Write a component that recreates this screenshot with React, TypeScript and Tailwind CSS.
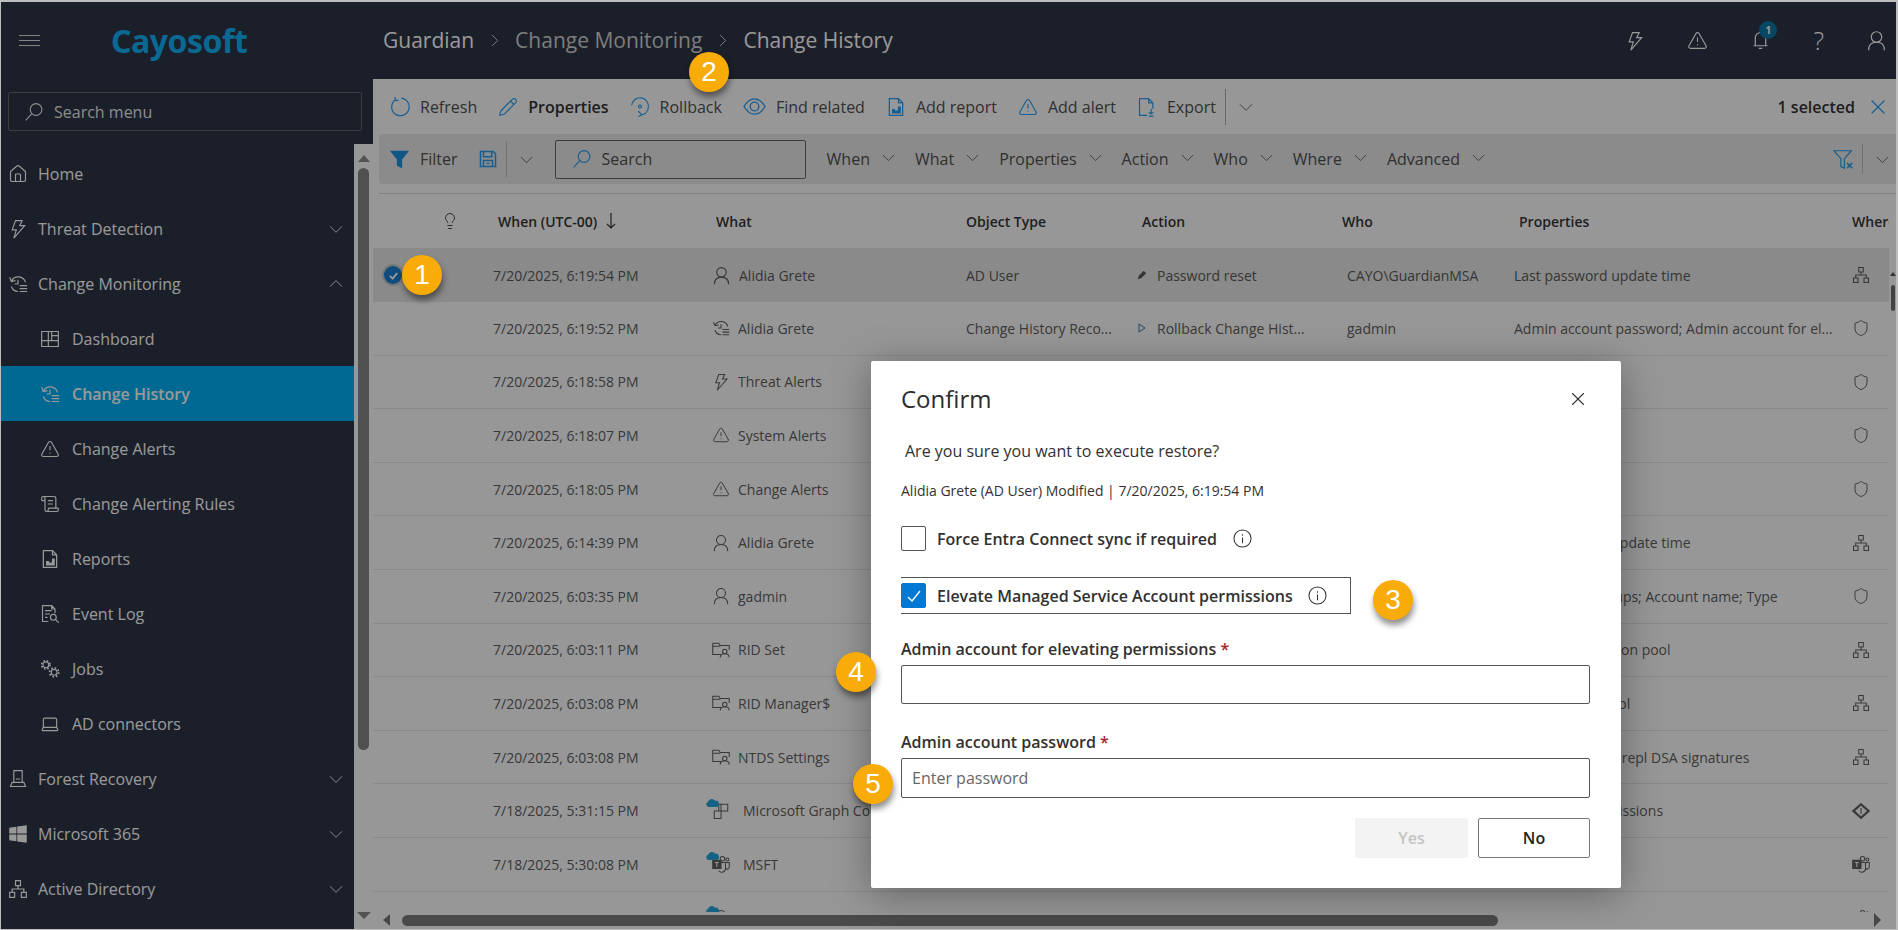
import type { ReactNode } from "react";
import { Home, Laptop, Lightbulb, Pencil, ScrollText, Shield, TriangleAlert, X } from "lucide-react";
import { FaWindows } from "react-icons/fa";

type IconProps = { className?: string };

const Svg = ({ className = "size-5", sw = 1.4, children }: IconProps & { sw?: number; children: ReactNode }) => (
  <svg viewBox="0 0 24 24" fill="none" stroke="currentColor" strokeWidth={sw} className={`shrink-0 ${className}`}>
    {children}
  </svg>
);

const Chevron = ({ className = "size-4" }: IconProps) => (
  <Svg className={className} sw={1.3}>
    <path d="M3 8l9 9 9-9" />
  </Svg>
);
const Bolt = ({ className }: IconProps) => (
  <Svg className={className}>
    <path d="M9 2h8l-3 6h6L7 23l3-10H5z" />
  </Svg>
);
const History = ({ className }: IconProps) => (
  <Svg className={className}>
    <path d="M4 9a9 9 0 0 1 17 1M2 4l2 5 5-1M4 15a9 9 0 0 0 8 6M12 7v5H8M14 14h9M14 17.5h9M14 21h9" />
  </Svg>
);
const Dashboard = ({ className }: IconProps) => (
  <Svg className={className}>
    <path d="M2 3h20v18H2zM10 3v11M2 14h8M10 14h12M14 3v11M14 8h8M10 14v7" />
  </Svg>
);
const Report = ({ className }: IconProps) => (
  <Svg className={className} sw={1.5}>
    <path d="M4 2h11l5 5v15H4zM15 2v5h5" />
    <path d="M8 19v-4h2v4zM11.5 19v-2h2v2zM15 19v-7h2v7z" fill="currentColor" />
  </Svg>
);
const EventLog = ({ className }: IconProps) => (
  <Svg className={className}>
    <path d="M10 21H3V2h11l4 4v5M14 2v4h4M6 8h8M6 12h6M6 16h3" />
    <circle cx="16" cy="16" r="3.5" />
    <path d="M19 19l3.5 3.5" />
  </Svg>
);
const Jobs = ({ className }: IconProps) => (
  <Svg className={className}>
    <circle cx="7" cy="7" r="3.5" />
    <circle cx="7" cy="7" r="5" strokeWidth="2" strokeDasharray="2 2" />
    <circle cx="17" cy="16" r="3.5" />
    <circle cx="17" cy="16" r="5.5" strokeWidth="2" strokeDasharray="2 2.3" />
  </Svg>
);
const Forest = ({ className }: IconProps) => (
  <Svg className={className}>
    <path d="M7 2h10v14H7zM9.5 12h5M5 16h14l2 5H3z" />
  </Svg>
);
const Sitemap = ({ className }: IconProps) => (
  <Svg className={className}>
    <path d="M9 2h6v6H9zM2 16h6v6H2zM16 16h6v6h-6zM12 8v4M5 16v-4h14v4" />
  </Svg>
);
const SearchIcon = ({ className }: IconProps) => (
  <Svg className={className}>
    <circle cx="14.5" cy="9" r="7" />
    <path d="M9.5 14L2 22" />
  </Svg>
);
const Refresh = ({ className }: IconProps) => (
  <Svg className={className}>
    <path d="M7 4.5A10 10 0 1 0 14 2.5M7 1v4h4" />
  </Svg>
);
const Rollback = ({ className }: IconProps) => (
  <Svg className={className}>
    <path d="M2 10A10 10 0 0 1 22 12a10 10 0 0 1-8 9.5M10 17l4 4.5-4 2" />
    <circle cx="12" cy="11.5" r="1.8" />
  </Svg>
);
const Eye = ({ className }: IconProps) => (
  <Svg className={className}>
    <path d="M1 12c3-5 7-8 11-8s8 3 11 8c-3 5-7 8-11 8s-8-3-11-8z" />
    <circle cx="12" cy="12" r="4.5" />
  </Svg>
);
const Export = ({ className }: IconProps) => (
  <Svg className={className}>
    <path d="M12 22H3V2h11l5 5v7M14 2v5h5M17 14v7M14 19h6M14 23h6" />
  </Svg>
);
const Floppy = ({ className }: IconProps) => (
  <Svg className={className} sw={2}>
    <path d="M2 2h17l3 3v17H2zM6 2v7h11V2M6 22v-8h12v8M10 18h4" />
  </Svg>
);
const FilterClear = ({ className }: IconProps) => (
  <Svg className={className}>
    <path d="M1 2h20l-8 9v11l-4-2v-9z" />
    <path d="M16 16l6 6M22 16l-6 6" strokeWidth="2" />
  </Svg>
);
const User = ({ className }: IconProps) => (
  <Svg className={className}>
    <circle cx="12" cy="8" r="6" />
    <path d="M3 23c0-6 3-9 9-9s9 3 9 9" />
  </Svg>
);
const FolderUser = ({ className }: IconProps) => (
  <Svg className={className}>
    <path d="M12 18H1V3h8l2 3h12v6M1 7h10" />
    <circle cx="17" cy="14" r="3" />
    <path d="M11 22c0-3 2-5 6-5s6 2 6 5" />
  </Svg>
);
const Teams = ({ className }: IconProps) => (
  <Svg className={className}>
    <circle cx="14" cy="5" r="3" />
    <circle cx="20.5" cy="6" r="2" />
    <path d="M9 10h9v8a5 5 0 0 1-9 3M18 10h5v6a3 3 0 0 1-5 2" />
    <rect x="1" y="7" width="11" height="11" fill="currentColor" />
    <path d="M4 10h5M6.5 10v6" stroke="#fff" />
  </Svg>
);
const Azure = ({ className }: IconProps) => (
  <Svg className={className} sw={3}>
    <path d="M12 3l10 9-10 9-10-9z" />
    <path d="M12 8v8" strokeWidth="1.5" />
  </Svg>
);
const GridApp = ({ className }: IconProps) => (
  <Svg className={className}>
    <path d="M9 3h12v9H9zM3 12h9v10H3zM12 3v19" />
  </Svg>
);
const Cloud = () => (
  <svg viewBox="0 0 16 10" className="absolute -left-[7px] -top-[4px] h-[9px] w-[15px] text-[#25a4dc]" fill="currentColor">
    <path d="M4 10a3 3 0 0 1-1-5.8A4.5 4.5 0 0 1 11 3a3.5 3.5 0 0 1 1.500 7z" />
  </svg>
);

const Badge = ({ n, className }: { n: number; className: string }) => (
  <div className={`absolute z-30 flex size-10 items-center justify-center rounded-full bg-[#f9ab0a] font-['Liberation_Sans',sans-serif] text-[28px] text-white shadow-[1px_5px_6px_rgba(0,0,0,0.45)] ${className}`}>
    {n}
  </div>
);

const NavItem = ({ icon, label, chevron, sub, active }: { icon: ReactNode; label: string; chevron?: "up" | "down"; sub?: boolean; active?: boolean }) => (
  <div className={`flex h-[55px] shrink-0 items-center text-[16px] ${sub ? "pl-[39px]" : "pl-[7px]"} ${active ? "bg-[#00b0f5] font-semibold" : ""}`}>
    <span className={sub ? "flex w-[32px]" : "flex w-[30px]"}>{icon}</span>
    <span className="flex-1">{label}</span>
    {chevron && <Chevron className={`mr-[10px] size-[16px] ${chevron === "up" ? "rotate-180" : ""}`} />}
  </div>
);

const Tool = ({ icon, label, bold }: { icon: ReactNode; label: string; bold?: boolean }) => (
  <div className="flex items-center gap-[10px]">
    <span className="text-[#2a9df0]">{icon}</span>
    <span className={bold ? "font-semibold text-[#333]" : ""}>{label}</span>
  </div>
);

const FilterMenu = ({ label }: { label: string }) => (
  <div className="flex items-center gap-[11px]">
    {label}
    <Chevron className="size-[15px] -translate-y-[2px]" />
  </div>
);

type Row = { date: string; icon: ReactNode; name: string; type: string; action: ReactNode; who: string; props: string; where: ReactNode; cloud?: boolean };

const ud = "size-[18px]";
const shield = <Shield className="size-[18px]" strokeWidth={1.3} />;
const site = <Sitemap className="size-[18px]" />;

const rows: Row[] = [
  { date: "7/20/2025, 6:19:52 PM", icon: <History className={ud} />, name: "Alidia Grete", type: "Change History Reco...", action: <><svg viewBox="0 0 10 10" className="mr-[10px] size-[10px] text-[#2a7dc0]" fill="none" stroke="currentColor"><path d="M2 1l6 4-6 4z" /></svg>Rollback Change Hist...</>, who: "gadmin", props: "Admin account password; Admin account for el...", where: shield },
  { date: "7/20/2025, 6:18:58 PM", icon: <Bolt className={ud} />, name: "Threat Alerts", type: "Alert", action: "Created", who: "System", props: "Severity", where: shield },
  { date: "7/20/2025, 6:18:07 PM", icon: <TriangleAlert className={ud} strokeWidth={1.3} />, name: "System Alerts", type: "Alert", action: "Created", who: "System", props: "Severity", where: shield },
  { date: "7/20/2025, 6:18:05 PM", icon: <TriangleAlert className={ud} strokeWidth={1.3} />, name: "Change Alerts", type: "Alert", action: "Created", who: "System", props: "Severity", where: shield },
  { date: "7/20/2025, 6:14:39 PM", icon: <User className={ud} />, name: "Alidia Grete", type: "AD User", action: "Password reset", who: "gadmin", props: "Last password update time", where: site },
  { date: "7/20/2025, 6:03:35 PM", icon: <User className={ud} />, name: "gadmin", type: "AD User", action: "Modified", who: "gadmin", props: "Member of Groups; Account name; Type", where: shield },
  { date: "7/20/2025, 6:03:11 PM", icon: <FolderUser className={ud} />, name: "RID Set", type: "Container", action: "Modified", who: "SYSTEM", props: "Next RID allocation pool", where: site },
  { date: "7/20/2025, 6:03:08 PM", icon: <FolderUser className={ud} />, name: "RID Manager$", type: "Container", action: "Modified", who: "SYSTEM", props: "RID available pool", where: site },
  { date: "7/20/2025, 6:03:08 PM", icon: <FolderUser className={ud} />, name: "NTDS Settings", type: "Container", action: "Modified", who: "SYSTEM", props: "Count of retired repl DSA signatures", where: site },
  { date: "7/18/2025, 5:31:15 PM", icon: <GridApp className={ud} />, name: "Microsoft Graph Command Line Tools", type: "Entra App", action: "Modified", who: "admin", props: "Delegated permissions", where: <Azure className={ud} />, cloud: true },
  { date: "7/18/2025, 5:30:08 PM", icon: <Teams className={ud} />, name: "MSFT", type: "Team", action: "Modified", who: "admin", props: "Team settings", where: <Teams className={ud} />, cloud: true },
  { date: "7/18/2025, 5:30:07 PM", icon: <User className={ud} />, name: "MSFT", type: "Entra Group", action: "Add Member", who: "admin", props: "Members", where: <Teams className={ud} />, cloud: true },
];

const cols = "grid grid-cols-[120px_219px_254px_171px_210px_167px_340px_35px]";

const Check = ({ on }: { on?: boolean }) => (
  <span className={`flex size-[25px] shrink-0 items-center justify-center rounded-[2px] border ${on ? "border-[#0078d4] bg-[#0078d4]" : "border-[#555]"}`}>
    {on && (
      <svg viewBox="0 0 16 16" className="size-[16px]" fill="none" stroke="#fff" strokeWidth="1.3">
        <path d="M2 9l4 4 8-10" />
      </svg>
    )}
  </span>
);

const Info = () => (
  <svg viewBox="0 0 20 20" className="size-[19px] shrink-0 text-[#333]" fill="none" stroke="currentColor" strokeWidth="1.1">
    <circle cx="10" cy="10" r="9" />
    <path d="M10 9v6M10 5.500v1.500" />
  </svg>
);

export default function App() {
  return (
    <div className="relative h-[930px] overflow-hidden border-t-2 border-r-2 border-b border-l border-[#bdbdbd] bg-[#fcfcfc] font-['Open_Sans',sans-serif] text-[#505050]">
      {/* HEADER */}
      <header className="flex h-[77px] items-center bg-[#2d3446] text-[#f0f0f0]">
        <div className="flex w-[382px] items-center">
          <div className="ml-[18px] flex w-[21px] flex-col gap-[4px]">
            <span className="h-px bg-[#ddd]" />
            <span className="h-px bg-[#ddd]" />
            <span className="h-px bg-[#ddd]" />
          </div>
          <span className="ml-[71px] font-['Noto_Sans',sans-serif] text-[32px] font-bold tracking-[-0.5px] text-[#12b0f5]">Cayosoft</span>
        </div>
        <div className="flex items-center text-[21px]">
          <span className="text-[#fff]">Guardian</span>
          <Chevron className="mx-[13px] size-[15px] -rotate-90" />
          <span className="text-[#cfd0d2]">Change Monitoring</span>
          <Chevron className="mx-[13px] size-[15px] -rotate-90" />
          <span className="text-[#fff]">Change History</span>
        </div>
        <div className="ml-auto flex items-center gap-[42px] pr-[9px] text-[#fff]">
          <Bolt className="size-[20px]" />
          <TriangleAlert className="size-[21px]" strokeWidth={1.3} />
          <div className="relative">
            <svg viewBox="0 0 24 24" className="size-[21px]" fill="none" stroke="currentColor" strokeWidth="1.4">
              <path d="M6 18V9a6 6 0 0 1 12 0v9M4 18h16M10 21h4" />
            </svg>
            <span className="absolute -right-[6px] -top-[9px] flex size-[18px] items-center justify-center rounded-full bg-[#0b77a5] text-[10px] font-bold text-white">1</span>
          </div>
          <span className="text-[25px] leading-none font-light">?</span>
          <User className="size-[21px]" />
        </div>
      </header>

      <div className="flex h-[850px]">
        {/* SIDEBAR */}
        <aside className="flex w-[372px] shrink-0 flex-col bg-[#2d3446] text-[#fff]">
          <div className="ml-[7px] mt-[13px] flex h-[39px] w-[354px] items-center gap-[10px] rounded-[2px] border border-[#64666a] pl-[15px] text-[16px] text-[#e8e8e8]">
            <SearchIcon className="size-[20px]" />
            Search menu
          </div>
          <div className="mt-[13px] flex min-h-0 flex-1">
            <nav className="flex w-[353px] flex-col overflow-hidden pt-[2px]">
              <NavItem icon={<Home className="size-5" strokeWidth={1.4} />} label="Home" />
              <NavItem icon={<Bolt className="size-5" />} label="Threat Detection" chevron="down" />
              <NavItem icon={<History className="size-5" />} label="Change Monitoring" chevron="up" />
              <NavItem sub icon={<Dashboard className="size-5" />} label="Dashboard" />
              <NavItem sub active icon={<History className="size-5" />} label="Change History" />
              <NavItem sub icon={<TriangleAlert className="size-5" strokeWidth={1.4} />} label="Change Alerts" />
              <NavItem sub icon={<ScrollText className="size-5" strokeWidth={1.4} />} label="Change Alerting Rules" />
              <NavItem sub icon={<Report className="size-5" />} label="Reports" />
              <NavItem sub icon={<EventLog className="size-5" />} label="Event Log" />
              <NavItem sub icon={<Jobs className="size-5" />} label="Jobs" />
              <NavItem sub icon={<Laptop className="size-5" strokeWidth={1.4} />} label="AD connectors" />
              <NavItem icon={<Forest className="size-5" />} label="Forest Recovery" chevron="down" />
              <NavItem icon={<FaWindows className="size-5" />} label="Microsoft 365" chevron="down" />
              <NavItem icon={<Sitemap className="size-5" />} label="Active Directory" chevron="down" />
            </nav>
            {/* sidebar scrollbar */}
            <div className="flex w-[19px] flex-col items-center bg-[#fcfcfc] pt-[11px]">
              <span className="size-0 border-x-[6px] border-b-[7px] border-x-transparent border-b-[#8a8a8a]" />
              <span className="mt-[6px] h-[582px] w-[11px] rounded-full bg-[#858585]" />
              <span className="mt-auto mb-[10px] size-0 border-x-[7px] border-t-[7px] border-x-transparent border-t-[#8a8a8a]" />
            </div>
          </div>
        </aside>

        {/* MAIN */}
        <main className="flex min-w-0 flex-1 flex-col text-[16px]">
          <div className="flex h-[55px] shrink-0 items-center gap-[21px] pl-[16px]">
            <Tool icon={<Refresh className="size-[21px]" />} label="Refresh" />
            <Tool bold icon={<Pencil className="size-[20px]" strokeWidth={1.4} />} label="Properties" />
            <Tool icon={<Rollback className="size-[20px]" />} label="Rollback" />
            <Tool icon={<Eye className="size-[23px]" />} label="Find related" />
            <Tool icon={<Report className="size-[20px]" />} label="Add report" />
            <Tool icon={<TriangleAlert className="size-[20px]" strokeWidth={1.4} />} label="Add alert" />
            <Tool icon={<Export className="size-[20px]" />} label="Export" />
            <span className="-ml-[12px] h-[36px] w-px bg-[#aaa]" />
            <Chevron className="-ml-[9px] size-[16px]" />
            <div className="ml-auto flex items-center gap-[11px] pr-[6px]">
              <span className="font-semibold text-[#333]">1 selected</span>
              <X className="size-[24px] text-[#2a9df0]" strokeWidth={1.2} />
            </div>
          </div>

          <div className="ml-[6px] flex h-[50px] shrink-0 items-center rounded-l-[3px] bg-[#e8e8e8] pl-[10px] pr-[6px]">
            <svg viewBox="0 0 24 24" className="size-[21px] text-[#1b8fe0]" fill="currentColor">
              <path d="M1 2h22l-8 10v10l-6-3v-7z" />
            </svg>
            <span className="ml-[10px]">Filter</span>
            <Floppy className="ml-[21px] size-[18px] text-[#2a9df0]" />
            <span className="ml-[9px] h-[36px] w-px bg-[#bbb]" />
            <Chevron className="ml-[12px] size-[15px]" />
            <div className="ml-[21px] flex h-[39px] w-[251px] items-center gap-[10px] rounded-[2px] border border-[#666] pl-[16px]">
              <SearchIcon className="size-[20px] text-[#2a9df0]" />
              Search
            </div>
            <div className="ml-[21px] flex items-center gap-[19px]">
              <FilterMenu label="When" />
              <FilterMenu label="What" />
              <FilterMenu label="Properties" />
              <FilterMenu label="Action" />
              <FilterMenu label="Who" />
              <FilterMenu label="Where" />
              <FilterMenu label="Advanced" />
            </div>
            <FilterClear className="ml-auto size-[21px] text-[#2a9df0]" />
            <span className="ml-[8px] h-[30px] w-px bg-[#bbb]" />
            <Chevron className="ml-[12px] size-[15px]" />
          </div>

          <div className="ml-[6px] mt-[9px] h-px shrink-0 bg-[#d8d8d8]" />

          <div className="flex min-h-0 flex-1">
            <div className="h-[718px] w-[1516px] shrink-0 overflow-hidden text-[14px]">
              <div className={`${cols} h-[54px] items-center font-semibold text-[#363636]`}>
                <span className="pl-[68px]">
                  <Lightbulb className="size-[18px] text-[#444]" strokeWidth={1.3} />
                </span>
                <span className="flex items-center gap-[8px] pl-[5px]">
                  When (UTC-00)
                  <svg viewBox="0 0 12 18" className="h-[18px] w-[12px]" fill="none" stroke="currentColor" strokeWidth="1.200">
                    <path d="M6 1v15M2 12l4 4 4-4" />
                  </svg>
                </span>
                <span className="pl-[4px]">What</span>
                <span>Object Type</span>
                <span className="pl-[5px]">Action</span>
                <span className="-ml-[5px]">Who</span>
                <span className="pl-[5px]">Properties</span>
                <span className="-ml-[2px] overflow-hidden">Where</span>
              </div>

              {/* selected row */}
              <div className={`${cols} h-[54px] items-center bg-[#e6e6e6] text-[#5a5a5a]`}>
                <span className="pl-[11px]">
                  <span className="flex size-[18px] items-center justify-center rounded-full bg-[#1b7fd0] shadow-[0_0_0_2px_#c8c8c8]">
                    <svg viewBox="0 0 12 12" className="size-[11px]" fill="none" stroke="#fff" strokeWidth="2">
                      <path d="M2 6.500l3 3 5-6" />
                    </svg>
                  </span>
                </span>
                <span>7/20/2025, 6:19:54 PM</span>
                <span className="flex items-center gap-[8px]">
                  <User className="size-[19px]" />
                  Alidia Grete
                </span>
                <span>AD User</span>
                <span className="flex items-center">
                  <svg viewBox="0 0 12 12" className="mr-[10px] size-[10px]" fill="currentColor">
                    <path d="M1 11l1-4 6-6 3 3-6 6z" />
                  </svg>
                  Password reset
                </span>
                <span>CAYO\GuardianMSA</span>
                <span>Last password update time</span>
                <span className="col-start-8 flex -translate-x-[2px]">
                  <Sitemap className="size-[18px]" />
                </span>
              </div>

              {rows.map((r, i) => (
                <div key={i} className={`${cols} h-[53.6px] items-center border-b border-[#e4e4e4] text-[#5f5f5f]`}>
                  <span className="col-start-2">{r.date}</span>
                  <span className="flex min-w-0 items-center whitespace-nowrap">
                    <span className="relative mr-[8px] flex">
                      {r.cloud && <Cloud />}
                      {r.icon}
                    </span>
                    <span className={r.cloud ? "truncate pl-[5px]" : "truncate"}>{r.name}</span>
                  </span>
                  <span className="truncate">{r.type}</span>
                  <span className="flex items-center whitespace-nowrap">{r.action}</span>
                  <span>{r.who}</span>
                  <span className="whitespace-nowrap">{r.props}</span>
                  <span className="col-start-8 flex -translate-x-[2px]">{r.where}</span>
                </div>
              ))}
            </div>
            {/* table vertical scrollbar */}
            <div className="flex flex-1 flex-col items-center pt-[78px]">
              <span className="size-0 border-x-[3px] border-b-[4px] border-x-transparent border-b-[#555]" />
              <span className="mt-[9px] h-[26px] w-[4px] rounded-full bg-[#707070]" />
            </div>
          </div>

          {/* table horizontal scrollbar */}
          <div className="flex h-[18px] shrink-0 items-center pl-[10px]">
            <span className="size-0 border-y-[6px] border-r-[7px] border-y-transparent border-r-[#777]" />
            <span className="ml-[12px] h-[11px] w-[1096px] rounded-full bg-[#7c7c7c]" />
            <span className="ml-auto mr-[15px] size-0 border-y-[7px] border-l-[7px] border-y-transparent border-l-[#777]" />
          </div>
        </main>
      </div>

      {/* MODAL BACKDROP */}
      <div className="absolute inset-0 z-10 bg-black/40" />

      {/* DIALOG */}
      <div className="absolute left-[869.5px] top-[359px] z-20 h-[527px] w-[750px] rounded-[2px] bg-white px-[30.5px] pt-[21px] text-[16px] text-[#323130] shadow-[0_6px_40px_rgba(0,0,0,0.35)]">
        <div className="flex h-[34px] items-center justify-between pr-[1px]">
          <h2 className="text-[24px] font-medium text-[#2b2b2b]">Confirm</h2>
          <X className="size-[22px] text-[#333]" strokeWidth={1.2} />
        </div>
        <p className="mt-[24px] pl-[4px] leading-[22px]">Are you sure you want to execute restore?</p>
        <p className="mt-[19px] text-[14px] leading-[20px]">Alidia Grete (AD User) Modified | 7/20/2025, 6:19:54 PM</p>
        <label className="mt-[25px] flex items-center font-semibold">
          <Check />
          <span className="ml-[11px] mr-[16px]">Force Entra Connect sync if required</span>
          <Info />
        </label>
        <label className="mt-[26px] flex h-[37px] w-[450px] items-center border border-l-0 border-[#555] font-semibold">
          <Check on />
          <span className="ml-[11px] mr-[15px]">Elevate Managed Service Account permissions</span>
          <Info />
        </label>
        <div className="mt-[24px] font-semibold leading-[22px]">
          Admin account for elevating permissions <span className="text-[#a4262c]">*</span>
        </div>
        <input className="mt-[5px] h-[39px] w-full rounded-[2px] border border-[#555] px-[10px] outline-none" />
        <div className="mt-[27px] font-semibold leading-[22px]">
          Admin account password <span className="text-[#a4262c]">*</span>
        </div>
        <input type="password" placeholder="Enter password" className="mt-[5px] h-[40px] w-full rounded-[2px] border border-[#555] px-[10px] outline-none placeholder:text-[#666]" />
        <div className="mt-[20px] flex justify-end gap-[10px]">
          <button className="h-[40px] w-[113px] rounded-[2px] bg-[#f3f3f3] font-semibold text-[#c4c4c4]">Yes</button>
          <button className="h-[40px] w-[112px] rounded-[2px] border border-[#777] font-semibold text-[#222]">No</button>
        </div>
      </div>

      <Badge n={1} className="left-[401px] top-[253px]" />
      <Badge n={2} className="left-[688px] top-[50px]" />
      <Badge n={3} className="left-[1372px] top-[578px]" />
      <Badge n={4} className="left-[835px] top-[650px]" />
      <Badge n={5} className="left-[852px] top-[762px]" />
    </div>
  );
}
